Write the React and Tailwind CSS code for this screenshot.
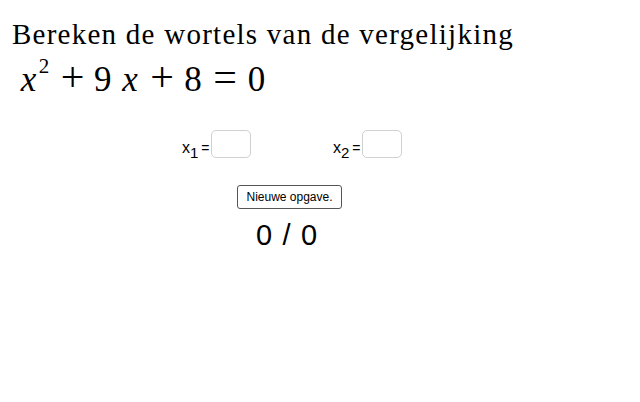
import React from "react";

const Label = ({ sub }) => (
  <span className="w-[29px] mb-[2px] flex items-baseline text-[15px] leading-none text-black font-['Liberation_Sans',Arial,sans-serif]">
    <span className="text-[16px]">x</span>
    <span className="relative top-[5px]">{sub}</span>
    <span className="ml-[3px] text-[14px]">=</span>
  </span>
);

const Cell = ({ w, children, className = "" }) => (
  <span className={`${w} text-center ${className}`}>{children}</span>
);

export default function App() {
  return (
    <div className="w-[640px] h-[402px] bg-white overflow-hidden text-black">
      {/* Title */}
      <div className="pl-[12px] pt-[20px] text-[29px] leading-[28px] tracking-[1.25px] whitespace-nowrap font-['Liberation_Serif','Times_New_Roman',serif]">
        Bereken de wortels van de vergelijking
      </div>

      {/* Equation */}
      <div className="pl-[20px] pt-[12px] flex items-baseline text-[35px] leading-[40px] font-['Liberation_Serif','Times_New_Roman',serif]">
        <Cell w="w-[17px]" className="italic">x</Cell>
        <Cell w="w-[14px]" className="text-[21px] leading-none relative -top-[18px]">2</Cell>
        <Cell w="w-[43px]" className="text-[42px] leading-[20px]">+</Cell>
        <Cell w="w-[16px]">9</Cell>
        <Cell w="w-[40px]" className="italic">x</Cell>
        <Cell w="w-[24px]" className="text-[42px] leading-[20px]">+</Cell>
        <Cell w="w-[38px]">8</Cell>
        <Cell w="w-[26px]" className="text-[42px] leading-[20px]">=</Cell>
        <Cell w="w-[37px]">0</Cell>
      </div>

      {/* Inputs */}
      <div className="flex items-end pt-[30px]">
        <div className="flex items-end ml-[182px]">
          <Label sub="1" />
          <div className="w-[40px] h-[28px] rounded-[5px] border border-[#d0d0d0] bg-white" />
        </div>
        <div className="flex items-end ml-[82px]">
          <Label sub="2" />
          <div className="w-[40px] h-[28px] rounded-[5px] border border-[#d0d0d0] bg-white" />
        </div>
      </div>

      {/* Button */}
      <div className="pt-[25px] pl-[237px]">
        <button className="h-[24px] w-[105px] rounded-[3px] border border-[#555] bg-white text-[12px] leading-none text-black font-['Liberation_Sans',Arial,sans-serif]">
          Nieuwe opgave.
        </button>
      </div>

      {/* Score */}
      <div className="pt-[11px] pl-[256px] text-[29px] leading-[30px] tracking-[1.2px] font-['Liberation_Sans',Arial,sans-serif]">
        0 / 0
      </div>
    </div>
  );
}
